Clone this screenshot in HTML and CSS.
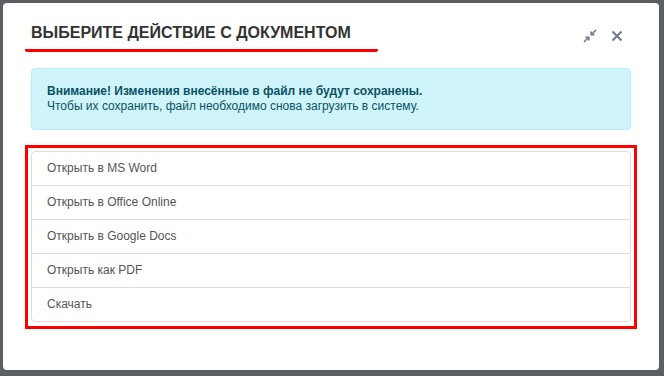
FILE: index.html
```html
<!DOCTYPE html>
<html lang="ru">
<head>
  <meta charset="UTF-8" />
  <title>Выберите действие с документом</title>
  <link rel="stylesheet" href="styles.css">
</head>
<body>
  <div class="modal">
    <div class="modal-header">
      <h2 class="modal-title">ВЫБЕРИТЕ ДЕЙСТВИЕ С ДОКУМЕНТОМ</h2>
      <div class="modal-tools">
        <button class="tool" title="Свернуть">
          <svg width="14" height="14" viewBox="0 0 14 14">
            <path d="M13 1 L8.5 5.5 M8.2 2.6 V5.8 H11.4 M1 13 L5.5 8.5 M2.6 8.2 H5.8 V11.4" stroke="#6c7a8c" stroke-width="1.6" fill="none" />
          </svg>
        </button>
        <button class="tool" title="Закрыть">
          <svg width="12" height="12" viewBox="0 0 12 12">
            <path d="M1.5 1.5 L10.5 10.5 M10.5 1.5 L1.5 10.5" stroke="#6c7a8c" stroke-width="2" fill="none" />
          </svg>
        </button>
      </div>
    </div>

    <div class="modal-body">
      <div class="alert">
        <strong>Внимание! Изменения внесённые в файл не будут сохранены.</strong><br>
        Чтобы их сохранить, файл необходимо снова загрузить в систему.
      </div>

      <div class="highlight">
        <div class="list-group">
          <a class="list-item">Открыть в MS Word</a>
          <a class="list-item">Открыть в Office Online</a>
          <a class="list-item">Открыть в Google Docs</a>
          <a class="list-item">Открыть как PDF</a>
          <a class="list-item">Скачать</a>
        </div>
      </div>
    </div>
  </div>
</body>
</html>
```

FILE: styles.css
```css
body {
  margin: 0;
  background: #5b5e62;
  font-family: 'Liberation Sans', Arial, sans-serif;
  font-size: 12px;
}

.modal {
  margin: 3px;
  width: 656px;
  height: 367px;
  background: #ffffff;
  border-radius: 4px;
  box-sizing: border-box;
}

.modal-header {
  display: flex;
  align-items: flex-start;
  justify-content: space-between;
  padding: 20px 36px 0 22px;
}

.modal-title {
  margin: 0;
  padding: 2px 27px 8px 6px;
  font-size: 16px;
  font-weight: bold;
  line-height: 16px;
  color: #333;
  border-bottom: 3px solid #f00;
  border-radius: 2px;
}

.modal-tools {
  display: flex;
  align-items: center;
  gap: 14px;
  padding-top: 6px;
}

.tool {
  display: flex;
  padding: 0;
  border: none;
  background: none;
  cursor: pointer;
}

.modal-body {
  padding: 16px 28px 0;
}

.alert {
  padding: 15px;
  line-height: 15px;
  color: #0b5263;
  background: #cff4fc;
  border: 1px solid #b8eef9;
  border-radius: 4px;
}

.highlight {
  margin: 15px -6px 0;
  padding: 3px 3px 4px;
  border: 3px solid #f00;
}

.list-group {
  border: 1px solid #dddddd;
  border-radius: 4px;
}

.list-item {
  display: block;
  padding: 10px 15px;
  line-height: 13px;
  color: #555;
  cursor: pointer;
}

.list-item + .list-item {
  border-top: 1px solid #dddddd;
}

.list-item:hover {
  background: #f5f5f5;
}
```
